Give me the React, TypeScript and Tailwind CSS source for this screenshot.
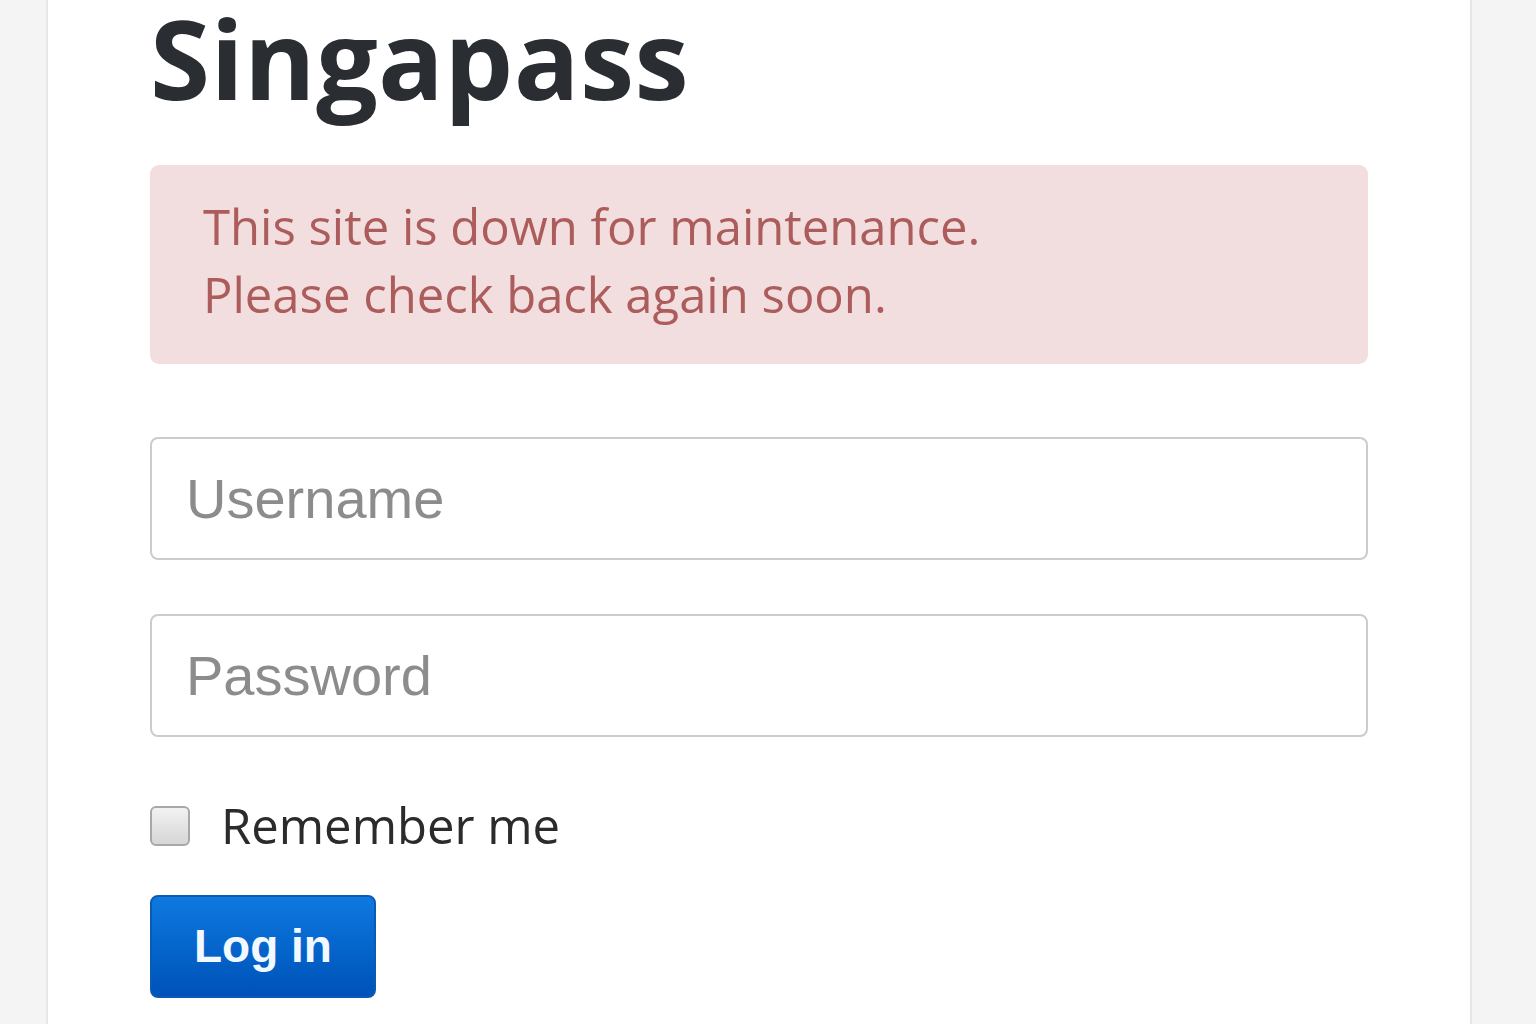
import React from 'react'

export default function App() {
  return (
    <div className="min-h-screen w-full bg-[#f4f4f4] overflow-hidden">
      <div className="ml-[46px] flex h-[1024px] w-[1426px] flex-col border-x-2 border-[#e6e6e6] bg-white px-[102px]">
        <h1 className="font-['Open_Sans',sans-serif] text-[109px] font-bold leading-[116px] tracking-[0.4px] text-[#2a2e33]">
          Singapass
        </h1>

        <div className="mt-[49px] h-[199px] rounded-[9px] bg-[#f2dede] pl-[53px] pt-[27px] font-['Open_Sans',sans-serif] text-[49px] leading-[68px] text-[#ad5c5c]">
          <p>This site is down for maintenance.</p>
          <p>Please check back again soon.</p>
        </div>

        <form className="mt-[73px] flex flex-col">
          <input
            type="text"
            placeholder="Username"
            className="h-[123px] w-full rounded-[8px] border-2 border-[#cccccc] px-[34px] font-['Liberation_Sans',Arial,sans-serif] text-[56px] text-[#555] outline-none placeholder:text-[#8c8c8c]"
          />
          <input
            type="password"
            placeholder="Password"
            className="mt-[54px] h-[123px] w-full rounded-[8px] border-2 border-[#cccccc] px-[34px] font-['Liberation_Sans',Arial,sans-serif] text-[56px] text-[#555] outline-none placeholder:text-[#8c8c8c]"
          />

          <label className="mt-[64px] flex items-center gap-[31px]">
            <span className="block h-[40px] w-[40px] rounded-[6px] border-2 border-[#a8a8a8] bg-gradient-to-b from-[#f2f2f2] to-[#d6d6d6]" />
            <span className="font-['Open_Sans',sans-serif] text-[49px] leading-none text-[#2b2b2b]">
              Remember me
            </span>
          </label>

          <button
            type="button"
            className="mt-[45px] h-[103px] w-[226px] rounded-[8px] border-2 border-[#0b5bb5] bg-gradient-to-b from-[#0f79e0] to-[#0052b8] font-['Liberation_Sans',Arial,sans-serif] text-[46px] font-bold text-[#f2f8ff]"
          >
            Log in
          </button>
        </form>
      </div>
    </div>
  )
}
